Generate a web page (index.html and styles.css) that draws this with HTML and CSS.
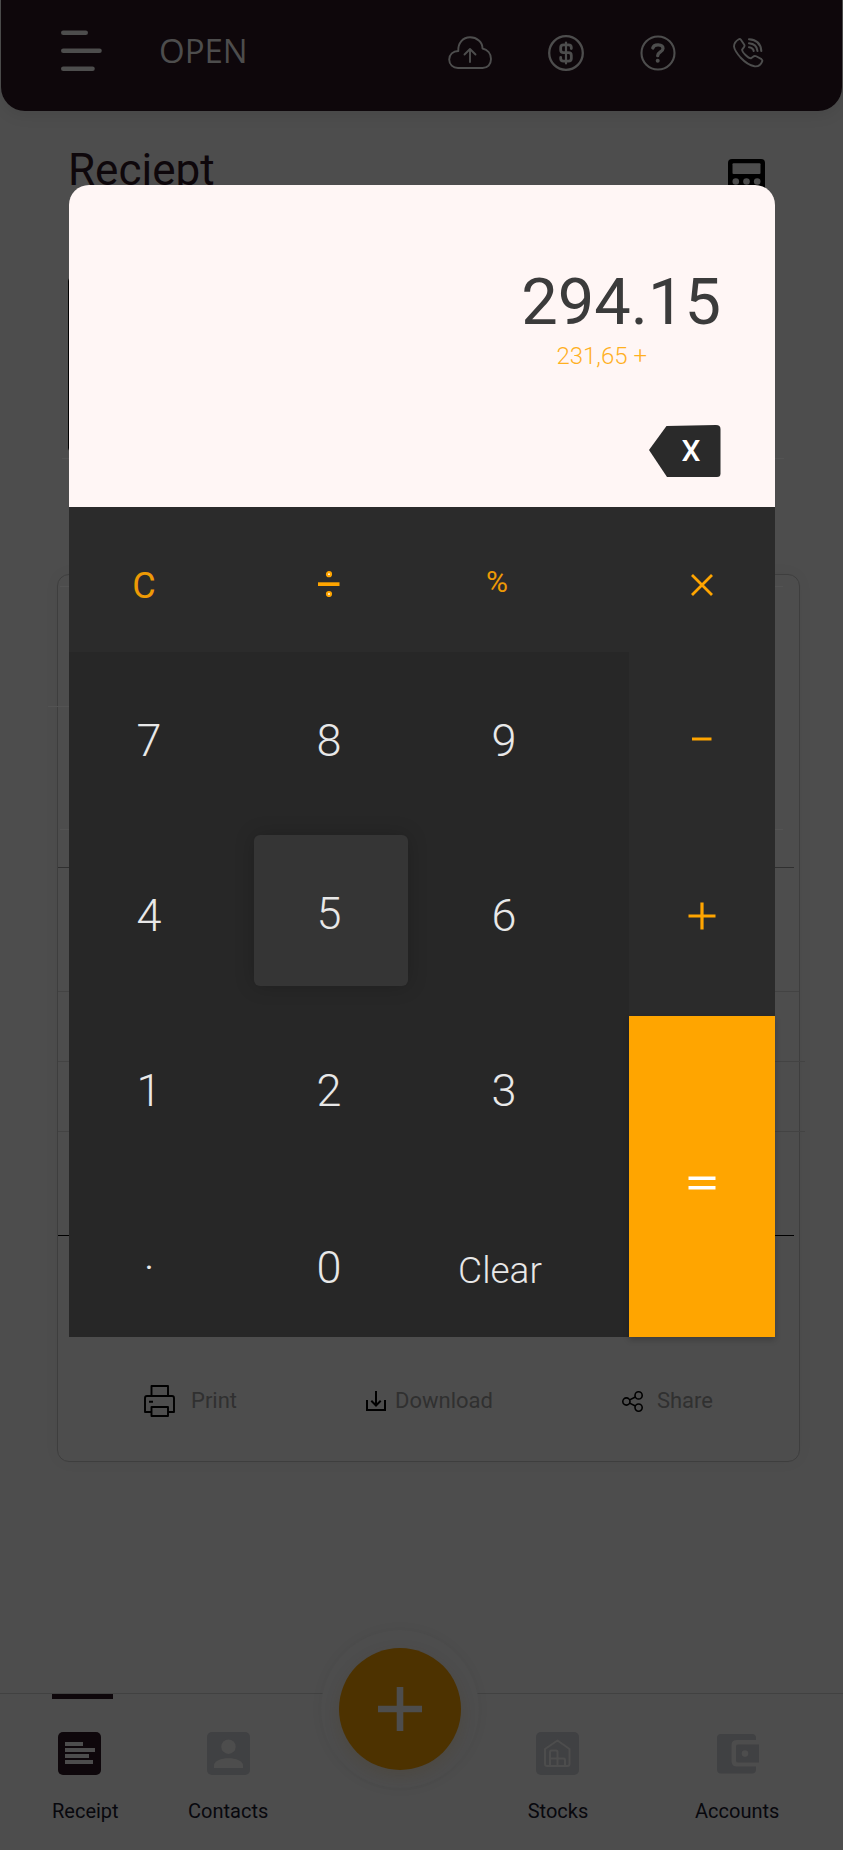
FILE: index.html
```html
<!DOCTYPE html>
<html lang="en">
<head>
<meta charset="utf-8">
<meta name="viewport" content="width=device-width, initial-scale=1">
<title>Receipt calculator</title>
<link rel="stylesheet" href="styles.css">
</head>
<body>
<div class="page">
  <header class="topbar">
    <button class="icon-btn" aria-label="Menu">
      <svg width="41" height="42" viewBox="0 0 41 42" fill="none" stroke="currentColor" stroke-width="4.6" stroke-linecap="round"><path d="M2.3 2.8H24.700M2.300 20.800H38.500M2.300 38.800H31.500"/></svg>
    </button>
    <span class="brand">OPEN</span>
    <div class="topbar-actions">
      <button class="icon-btn" aria-label="Upload">
        <svg width="44" height="34" viewBox="0 0 44 34" fill="none" stroke="currentColor" stroke-width="1.900" stroke-linecap="round" stroke-linejoin="round"><path d="M10 32H34.500C39.500 32 43 28.500 43 23C43 17.500 39.500 13.500 34.500 12.500C34.500 6 29 1.300 22 1.300C15 1.300 9.800 7 10.300 15C5 15 1.200 18.500 1.200 23.500C1.200 28.500 5 32 10 32Z"/><path d="M22 26V13M16.500 18.500L22 13L27.500 18.500"/></svg>
      </button>
      <button class="icon-btn" aria-label="Payments">
        <svg width="36" height="36" viewBox="0 0 36 36" fill="none" stroke="currentColor" stroke-linecap="round" stroke-linejoin="round"><circle cx="18" cy="18" r="16.800" stroke-width="2.300"/><path stroke-width="2.800" d="M23.300 13.500V12.500Q23.300 9.800 20.500 9.800H15.500Q12.700 9.800 12.700 12.500V15Q12.700 17.700 15.500 17.700H20.500Q23.300 17.700 23.300 20.500V23.500Q23.300 26.200 20.500 26.200H15.500Q12.700 26.200 12.700 23.500V22.500"/><path stroke-width="2.200" d="M18 7.500V28.500"/></svg>
      </button>
      <button class="icon-btn" aria-label="Help">
        <svg width="36" height="36" viewBox="0 0 36 36" fill="none" stroke="currentColor" stroke-linecap="round" stroke-linejoin="round"><circle cx="18" cy="18" r="16.500" stroke-width="2.100"/><path stroke-width="3.300" d="M12.800 13C13.800 8.800 23 8.700 23 13.500C23 17 17.700 17 17.700 20.700"/><circle cx="17.700" cy="25.800" r="2" fill="currentColor" stroke="none"/></svg>
      </button>
      <button class="icon-btn" aria-label="Call">
        <svg width="32" height="32" viewBox="0 0 32 32" fill="none" stroke="currentColor" stroke-width="1.900" stroke-linecap="round" stroke-linejoin="round"><path d="M6.800 2.200Q8 1.500 8.900 2.800L12.300 7.700Q13 9 12 10.200L10.100 12.600Q10 14.500 13.500 18Q17 21.500 19 21.300L21.500 19.400Q22.800 18.500 24.200 19.300L29.500 22.200Q30.700 23 30.200 24.300Q28 30 22.500 29.300Q15.500 28 8.500 20.500Q2.500 13.500 2 9.500Q2 5 6.800 2.200Z"/><path stroke-width="2.100" d="M17 2.300Q28.500 3 29.300 14M17 6.300Q24.800 7 25.500 14M17 10.200Q21 10.700 21.700 14"/></svg>
      </button>
    </div>
  </header>

  <main class="content">
    <div class="title-row">
      <h1 class="title">Reciept</h1>
      <svg class="calc-icon" width="37" height="39" viewBox="0 0 37 39" aria-hidden="true"><rect width="37" height="39" rx="4" fill="#000"/><rect x="4.500" y="4.300" width="28" height="10.700" rx="1" fill="#4d4d4d"/><g fill="#4d4d4d"><circle cx="7.800" cy="22.500" r="3.300"/><circle cx="18.500" cy="22.500" r="3.300"/><circle cx="29.200" cy="22.500" r="3.300"/><circle cx="7.800" cy="32" r="3.300"/><circle cx="18.500" cy="32" r="3.300"/><circle cx="29.200" cy="32" r="3.300"/></g></svg>
    </div>
    <div class="summary"></div>
    <div class="divider"></div>
    <section class="receipt">
      <div class="line line-head"></div>
      <div class="line line-wide"></div>
      <div class="line line-light"></div>
      <div class="line line-dark"></div>
      <div class="line line-item"></div>
      <div class="line line-out"></div>
      <div class="line line-out"></div>
      <div class="line line-total"></div>
      <div class="actions">
        <button class="action action-print">
          <svg width="31" height="32" viewBox="0 0 31 32" fill="none" stroke="#000" stroke-width="1.900" stroke-linejoin="round" aria-hidden="true"><path d="M7.500 11V1H24V11M7.500 27H1V13Q1 11 3 11H28Q30 11 30 13V27H24M7.500 22H24V31H7.500ZM5 16.700H9"/></svg>
          <span>Print</span>
        </button>
        <button class="action action-download">
          <svg width="20" height="20" viewBox="0 0 20 20" fill="none" stroke="#000" stroke-width="2" aria-hidden="true"><path d="M1 9V19H19V9M10 0V14.500M5.300 9.800L10 14.500L14.700 9.800"/></svg>
          <span>Download</span>
        </button>
        <button class="action action-share">
          <svg width="21" height="21" viewBox="0 0 21 21" fill="none" stroke="#000" stroke-width="1.600" aria-hidden="true"><circle cx="4.400" cy="10.500" r="3.600"/><circle cx="16.600" cy="4.400" r="3.600"/><circle cx="16.600" cy="16.600" r="3.600"/><path d="M7.600 8.900L13.400 6M7.600 12.100L13.400 15"/></svg>
          <span>Share</span>
        </button>
      </div>
    </section>
  </main>

  <nav class="tabs">
    <a class="tab tab-current" href="#receipt">
      <svg width="43" height="43" viewBox="0 0 43 43" aria-hidden="true"><rect width="43" height="43" rx="5" fill="#0e070b"/><path fill="#4d4d4d" d="M7 10H25V14H7ZM7 16H37V20H7ZM7 22H31V26H7ZM7 28H35V32H7Z"/></svg>
      <span>Receipt</span>
    </a>
    <a class="tab" href="#contacts">
      <svg width="43" height="43" viewBox="0 0 43 43" aria-hidden="true"><rect width="43" height="43" rx="5" fill="#404143"/><circle cx="21.500" cy="14.700" r="7.200" fill="#4d4d4d"/><path fill="#4d4d4d" d="M7 36V33.500C7 29 14 26.300 21.500 26.300S36 29 36 33.500V36Z"/></svg>
      <span>Contacts</span>
    </a>
    <div class="fab-slot">
      <button class="fab" aria-label="Add">
        <svg width="44" height="44" viewBox="0 0 44 44" fill="#4d4d4d"><path d="M18.700 0H25.300V18.700H44V25.300H25.300V44H18.700V25.300H0V18.700H18.700Z"/></svg>
      </button>
    </div>
    <a class="tab" href="#stocks">
      <svg width="43" height="43" viewBox="0 0 43 43" fill="none" stroke="#4d4d4d" stroke-width="2" stroke-linejoin="round" aria-hidden="true"><rect width="43" height="43" rx="5" fill="#404143" stroke="none"/><path d="M9 32V17L21.500 8.500L33.500 17V32Q33.500 34 31.500 34H11Q9 34 9 32ZM14 34V20Q14 18.500 15.500 18.500H20Q21.500 18.500 21.500 20V34M14 26.500H27.500Q29 26.500 29 28V34"/></svg>
      <span>Stocks</span>
    </a>
    <a class="tab" href="#accounts">
      <svg width="43" height="43" viewBox="0 0 43 43" aria-hidden="true"><path fill="#404143" d="M5 2H36Q40 2 40 6V8H21Q15.500 8 15.500 13V29Q15.500 34.500 21 34.500H40V37.500Q40 41.500 36 41.500H5Q1 41.500 1 37.500V6Q1 2 5 2Z"/><path fill="#404143" fill-rule="evenodd" d="M22 12.500H43V30.500H22Q20 30.500 20 28.500V14.500Q20 12.500 22 12.500ZM29 18.300A3.300 3.300 0 1 0 29 24.900A3.300 3.300 0 1 0 29 18.300Z"/></svg>
      <span>Accounts</span>
    </a>
  </nav>

  <div class="overlay">
    <section class="calculator" role="dialog" aria-label="Calculator">
      <div class="display">
        <output class="result">294.15</output>
        <div class="pending">231,65 +</div>
        <button class="erase" aria-label="Erase">
          <svg class="erase-shape" width="72" height="52" viewBox="0 0 72 52" aria-hidden="true"><path fill="#2a2a2a" d="M0 25L17.500 1L67 0Q71.500 0 71.500 4V48.500Q71.500 52 68 52H18Z"/></svg>
          <span class="erase-label">X</span>
        </button>
      </div>
      <div class="keypad">
        <div class="functions">
          <button class="key fn">C</button>
          <button class="key" aria-label="Divide"><svg width="22" height="26" viewBox="0 0 22 26"><path d="M0 11.300H21.500V15H0Z" fill="#ffa500"/><g fill="#fff" stroke="#ffa500" stroke-width="2.200"><circle cx="11" cy="3.200" r="2"/><circle cx="11" cy="23" r="2"/></g></svg></button>
          <button class="key fn percent">%</button>
        </div>
        <div class="digits">
          <button class="key">7</button>
          <button class="key">8</button>
          <button class="key">9</button>
          <button class="key">4</button>
          <button class="key pressed">5</button>
          <button class="key">6</button>
          <button class="key">1</button>
          <button class="key">2</button>
          <button class="key">3</button>
          <button class="key last" aria-label="Decimal point">·</button>
          <button class="key last">0</button>
          <button class="key last clear">Clear</button>
        </div>
        <div class="operators">
          <button class="key" aria-label="Multiply"><svg width="22" height="22" viewBox="0 0 22 22" stroke="#ffa500" stroke-width="2.800"><path d="M1 1L21 21M21 1L1 21"/></svg></button>
          <button class="key" aria-label="Subtract"><svg width="20" height="4" viewBox="0 0 20 4" fill="#ffa500"><path d="M0 0.500H19.500V3.500H0Z"/></svg></button>
          <button class="key" aria-label="Add"><svg width="28" height="28" viewBox="0 0 28 28" stroke="#ffa500" stroke-width="3.200"><path d="M14 0.500V27.500M0.500 14H27.500"/></svg></button>
          <button class="key equals" aria-label="Equals"><svg width="28" height="14" viewBox="0 0 28 14" stroke="#fff" stroke-width="3.600"><path d="M0.500 2.300H27.500M0.500 11.700H27.500"/></svg></button>
        </div>
      </div>
    </section>
  </div>
</div>
</body>
</html>
```
FILE: styles.css
```css
* {
  box-sizing: border-box;
}

body {
  margin: 0;
  background: #4d4d4d;
  font-family: Roboto, "Liberation Sans", sans-serif;
}

button {
  margin: 0;
  padding: 0;
  border: 0;
  background: none;
  color: inherit;
  font: inherit;
  cursor: pointer;
}

svg {
  display: block;
  flex: none;
}

.page {
  position: relative;
  display: flex;
  flex-direction: column;
  min-height: 100vh;
}

/* Top bar */
.topbar {
  display: flex;
  align-items: center;
  height: 111px;
  margin: 0 1px;
  padding: 0 78px 10px 60px;
  border-radius: 0 0 24px 24px;
  background: #0e070b;
  box-shadow: 0 4px 16px rgba(0, 0, 0, 0.08);
  color: #4d4d4d;
}

.brand {
  margin-left: 57px;
  font-family: "Open Sans", "Noto Sans", sans-serif;
  font-size: 33px;
  line-height: 44px;
}

.topbar-actions {
  display: flex;
  align-items: center;
  gap: 56px;
  margin-left: auto;
  padding-top: 4px;
}

/* Receipt page */
.content {
  padding: 33px 43px 0 57px;
}

.title-row {
  display: flex;
  justify-content: space-between;
  padding: 0 35px 0 11px;
}

.title {
  margin: 0;
  color: #0e070b;
  font-size: 44px;
  font-weight: 400;
  line-height: 52px;
}

.calc-icon {
  margin-top: 15px;
}

.summary {
  height: 175px;
  margin: 79px 30px 0 11px;
  border: 1px solid #000;
  border-radius: 4px;
}

.divider {
  height: 7px;
  margin: 0 16px 0 5px;
  border-bottom: 1px solid #535353;
}

.receipt {
  margin-top: 115px;
  border: 1px solid #3e3e3e;
  border-radius: 12px;
  box-shadow: 0 0 16px rgba(0, 0, 0, 0.04);
}

.line {
  border-bottom: 1px solid #434343;
}

.line-head {
  height: 12px;
  margin: 0 16px 0 2px;
  border-color: #535353;
}

.line-wide {
  height: 120px;
  margin: 0 24px 0 -10px;
  border-color: #535353;
}

.line-light {
  height: 123px;
  margin: 0 16px 0 2px;
  border-color: #535353;
}

.line-dark {
  height: 38px;
  margin-right: 5px;
  border-color: #303030;
}

.line-item {
  height: 124px;
}

.line-out {
  height: 70px;
  margin-right: -6px;
}

.line-total {
  height: 104px;
  margin-right: 5px;
  border-color: #000;
}

.actions {
  display: flex;
  align-items: center;
  justify-content: space-between;
  padding: 149px 86px 44px;
}

.action {
  display: flex;
  align-items: center;
  color: #303030;
  font-size: 22px;
  line-height: 32px;
}

.action-print {
  gap: 16px;
}

.action-download {
  gap: 9px;
}

.action-share {
  gap: 14px;
}

/* Bottom tabs */
.tabs {
  display: grid;
  grid-template-columns: 100fr 145fr 157fr 119fr 200fr;
  column-gap: 20px;
  height: 157px;
  margin-top: auto;
  padding: 0 6px 0 36px;
  border-top: 1px solid #414141;
}

.tab {
  display: flex;
  flex-direction: column;
  align-items: center;
  gap: 24px;
  padding-top: 38px;
  color: #08080d;
  font-size: 20px;
  line-height: 24px;
  text-decoration: none;
}

.tab-current {
  align-items: flex-start;
  padding-left: 16px;
}

.tab-current svg {
  margin-left: 6px;
}

.tab-current::before {
  content: "";
  width: 61px;
  height: 5px;
  margin: -38px 0 9px;
  background: #0e070b;
}

.fab-slot {
  display: flex;
  align-items: center;
  justify-content: center;
  justify-self: center;
  width: 158px;
  height: 158px;
  margin-top: -64px;
  border-radius: 50%;
  background: #4d4d4d;
  box-shadow: 0 0 12px rgba(0, 0, 0, 0.05);
}

.fab {
  display: flex;
  align-items: center;
  justify-content: center;
  width: 122px;
  height: 122px;
  border-radius: 50%;
  background: #4d3200;
  box-shadow: 0 6px 16px rgba(77, 50, 0, 0.16);
}

/* Calculator dialog */
.overlay {
  position: absolute;
  inset: 0;
  padding: 185px 68px 0 69px;
}

.display {
  display: flex;
  flex-direction: column;
  align-items: flex-end;
  height: 322px;
  padding: 77px 54px 0 0;
  border-radius: 20px 20px 0 0;
  background: #fff6f5;
}

.result {
  color: #3b3b3b;
  font-size: 65px;
  line-height: 80px;
}

.pending {
  margin-right: 74px;
  color: #ffb01f;
  font-size: 24px;
  font-weight: 300;
  line-height: 28px;
}

.erase {
  display: grid;
  place-items: center;
  margin-top: 55px;
  color: #fff;
  font-size: 30px;
  font-weight: 500;
  line-height: 52px;
}

.erase-shape,
.erase-label {
  grid-area: 1 / 1;
}

.erase-label {
  padding-left: 12px;
}

.keypad {
  display: grid;
  grid-template-columns: 560fr 146fr;
  grid-template-rows: 145px auto;
  background: #2b2b2b;
}

.functions,
.digits {
  display: grid;
  grid-template-columns: 160fr 200fr 150fr 50fr;
}

.digits {
  grid-row: 2;
  grid-template-rows: repeat(3, 175px) 159px;
  padding-top: 1px;
  background: #272727;
}

.operators {
  display: grid;
  grid-row: 1 / 3;
  grid-column: 2;
  grid-template-rows: 155px 153px 201px 1fr;
}

.key {
  display: flex;
  align-items: center;
  justify-content: center;
  color: #e8e8e8;
  font-size: 45px;
  font-weight: 300;
}

.digits .key:nth-child(3n + 1),
.functions .key:first-child {
  grid-column: 1;
}

.functions .key {
  padding-top: 8px;
}

.functions .fn {
  padding: 12px 10px 0 0;
  color: #ed9a05;
  font-size: 36px;
  font-weight: 400;
}

.functions .percent {
  padding: 4px 14px 0 0;
  font-size: 30px;
}

.pressed {
  margin: 7px 21px 17px 25px;
  padding: 6px 4px 0 0;
  border-radius: 6px;
  background: #353535;
  box-shadow: 0 0 20px rgba(0, 0, 0, 0.2);
}

.last {
  padding-top: 20px;
}

.clear {
  padding: 26px 8px 0 0;
  font-size: 37px;
}

.equals {
  padding-top: 12px;
  background: #ffa500;
  box-shadow: 0 3px 6px rgba(0, 0, 0, 0.2);
}
```
